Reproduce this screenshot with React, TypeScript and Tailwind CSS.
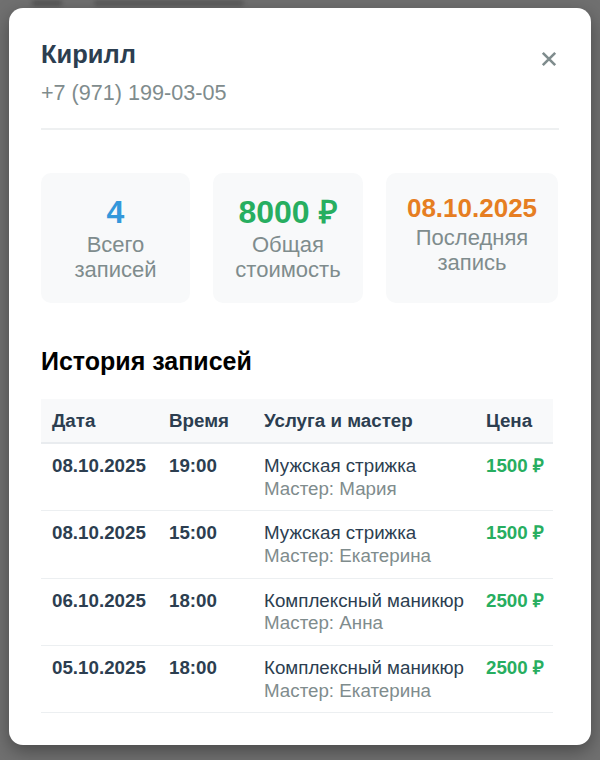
import React from "react";

const ROWS = [
  { date: "08.10.2025", time: "19:00", service: "Мужская стрижка", master: "Мария", price: "1500 ₽" },
  { date: "08.10.2025", time: "15:00", service: "Мужская стрижка", master: "Екатерина", price: "1500 ₽" },
  { date: "06.10.2025", time: "18:00", service: "Комплексный маникюр", master: "Анна", price: "2500 ₽" },
  { date: "05.10.2025", time: "18:00", service: "Комплексный маникюр", master: "Екатерина", price: "2500 ₽" },
];

export default function App() {
  return (
    <div
      className="relative min-h-[760px] w-full overflow-hidden bg-[#707070] pt-2"
      style={{ fontFamily: '"Liberation Sans", Arial, sans-serif' }}
    >
      {/* page behind the overlay, barely visible at the top */}
      <div className="absolute left-0 top-0 flex w-full gap-8 px-8 blur-[2px]">
        <div className="h-[6px] w-[30px] rounded bg-[#555]" />
        <div className="h-[6px] w-[150px] rounded bg-[#5a5a5a]" />
      </div>

      <div className="relative mx-auto w-[582px] rounded-[14px] bg-white px-8 pb-8 pt-8 shadow-[0_6px_18px_rgba(0,0,0,0.35)]">
        {/* Header */}
        <div className="flex items-start justify-between border-b-2 border-[#eef0f1] pb-[23px]">
          <div>
            <h2 className="text-[25.5px] font-bold leading-[29px] text-[#2c3e50]">Кирилл</h2>
            <p className="mt-[11px] text-[21.6px] leading-[25px] text-[#7f8c8d]">+7 (971) 199-03-05</p>
          </div>
          <button className="mt-[9px] flex h-5 w-5 items-center justify-center">
            <svg width="20" height="20" viewBox="0 0 20 20">
              <path d="M3.8 3.8L16.2 16.2M16.2 3.8L3.8 16.2" stroke="#7f8c8d" strokeWidth="2.6" />
            </svg>
          </button>
        </div>

        {/* Stats */}
        <div className="mt-[43px] grid grid-cols-[149px_150px_172px] gap-[23px]">
          <div className="flex h-[130px] flex-col items-center rounded-[10px] bg-[#f8f9fa] pt-5 text-center">
            <div className="text-[32px] font-bold leading-[38px] text-[#3498db]">4</div>
            <div className="mt-[1px] text-[22px] leading-[25px] text-[#7f8c8d]">
              Всего
              <br />
              записей
            </div>
          </div>
          <div className="flex h-[130px] flex-col items-center rounded-[10px] bg-[#f8f9fa] pt-5 text-center">
            <div className="text-[32px] font-bold leading-[38px] text-[#27ae60]">8000 ₽</div>
            <div className="mt-[1px] text-[22px] leading-[25px] text-[#7f8c8d]">
              Общая
              <br />
              стоимость
            </div>
          </div>
          <div className="flex h-[130px] flex-col items-center rounded-[10px] bg-[#f8f9fa] pt-5 text-center">
            <div className="text-[26px] font-bold leading-[30px] text-[#e67e22]">08.10.2025</div>
            <div className="mt-[2px] text-[22px] leading-[25px] text-[#7f8c8d]">
              Последняя
              <br />
              запись
            </div>
          </div>
        </div>

        {/* History */}
        <h3 className="mt-[44px] text-[25px] font-bold leading-[29px] text-black">История записей</h3>

        <table className="mt-[23px] w-[512px] table-fixed border-collapse text-left text-[18.75px]">
          <colgroup>
            <col className="w-[116px]" />
            <col className="w-[95px]" />
            <col className="w-[222px]" />
            <col />
          </colgroup>
          <thead>
            <tr className="border-b-2 border-[#e9ecef] bg-[#f8f9fa]">
              <th className="px-[11px] py-2.5 font-bold leading-[23px] text-[#2c3e50]">Дата</th>
              <th className="px-3 py-2.5 font-bold leading-[23px] text-[#2c3e50]">Время</th>
              <th className="px-3 py-2.5 font-bold leading-[23px] text-[#2c3e50]">Услуга и мастер</th>
              <th className="px-3 py-2.5 font-bold leading-[23px] text-[#2c3e50]">Цена</th>
            </tr>
          </thead>
          <tbody>
            {ROWS.map((r, i) => (
              <tr key={i} className="border-b border-[#eceff1] align-top">
                <td className="whitespace-nowrap px-[11px] pb-[10px] pt-[11px] font-bold leading-[22.67px] text-[#2c3e50]">{r.date}</td>
                <td className="px-3 pb-[10px] pt-[11px] font-bold leading-[22.67px] text-[#2c3e50]">{r.time}</td>
                <td className="whitespace-nowrap px-3 pb-[10px] pt-[11px] leading-[22.67px]">
                  <div className="text-[#2c3e50]">{r.service}</div>
                  <div className="text-[#7f8c8d]">Мастер: {r.master}</div>
                </td>
                <td className="whitespace-nowrap px-3 pb-[10px] pt-[11px] font-bold leading-[22.67px] text-[#27ae60]">{r.price}</td>
              </tr>
            ))}
          </tbody>
        </table>
      </div>
    </div>
  );
}
